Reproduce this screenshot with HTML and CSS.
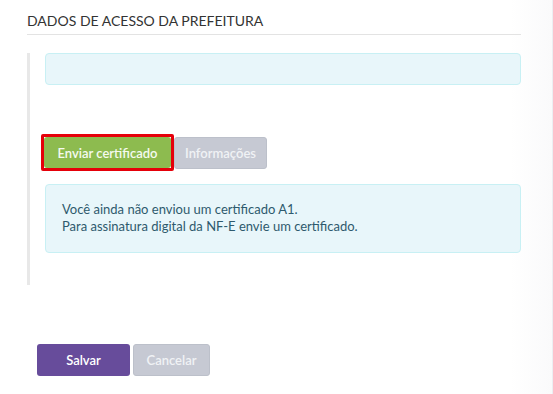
FILE: index.html
```html
<!DOCTYPE html>
<html lang="pt-BR">
  <head>
    <meta charset="UTF-8" />
    <meta name="viewport" content="width=device-width, initial-scale=1.0" />
    <title>Dados de acesso da prefeitura</title>
    <link rel="stylesheet" href="styles.css">
  </head>
  <body>
    <div class="page">
      <h3 class="section-title">DADOS DE ACESSO DA PREFEITURA</h3>
      <div class="section-body">
        <div class="alert alert-empty"></div>
        <div class="btn-row">
          <span class="focus-ring">
            <button class="btn btn-send">Enviar certificado</button>
          </span>
          <button class="btn btn-muted btn-info">Informações</button>
        </div>
        <div class="alert alert-text">
          <p>Você ainda não enviou um certificado A1.</p>
          <p>Para assinatura digital da NF-E envie um certificado.</p>
        </div>
      </div>
      <div class="form-actions">
        <button class="btn btn-save">Salvar</button>
        <button class="btn btn-muted btn-cancel">Cancelar</button>
      </div>
    </div>
  </body>
</html>
```

FILE: styles.css
```css
body {
  margin: 0;
  font-family: Lato, "Noto Sans", Arial, sans-serif;
  background-color: #fff;
}
.page {
  box-sizing: border-box;
  width: 553px;
  height: 394px;
  padding: 14px 31px 0 27px;
  border-right: 1px solid #eceef2;
  background: linear-gradient(to right, #fff 510px, #fafafb 552px);
}
.section-title {
  margin: 0;
  padding-bottom: 6px;
  font-size: 14px;
  font-weight: 400;
  line-height: 14px;
  color: #333;
  border-bottom: 1px solid #e3e3e3;
}
.section-body {
  margin-top: 18px;
  padding: 0 0 32px 15px;
  border-left: 3px solid #e8e8e8;
}
.alert {
  background-color: #e8f6fa;
  border: 1px solid #c8f0f4;
  border-radius: 4px;
}
.alert-empty {
  height: 30px;
}
.alert-text {
  padding: 16px 16px 17px;
  font-size: 13px;
  line-height: 17px;
  color: #2e5a6d;
}
.alert-text p {
  margin: 0;
}
.btn-row {
  display: flex;
  align-items: center;
  margin: 49px 0 13px -4px;
}
.focus-ring {
  display: flex;
  border: 3px solid #e5000a;
  border-radius: 2px;
}
.btn {
  box-sizing: border-box;
  height: 32px;
  padding: 0;
  border: 1px solid transparent;
  border-radius: 3px;
  font-family: inherit;
  font-size: 13px;
  font-weight: 600;
  cursor: pointer;
}
.btn-send {
  width: 127px;
  height: 31px;
  background-color: #8dbb4f;
  color: #f5faef;
}
.btn-info {
  width: 93px;
}
.btn-muted {
  background-color: #c6c9d3;
  border-color: #bcc0ca;
  color: #f0f2f5;
}
.form-actions {
  display: flex;
  gap: 3px;
  margin: 59px 0 0 10px;
}
.btn-save {
  width: 93px;
  background-color: #674c9b;
  color: #fff;
}
.btn-cancel {
  width: 77px;
}
```
